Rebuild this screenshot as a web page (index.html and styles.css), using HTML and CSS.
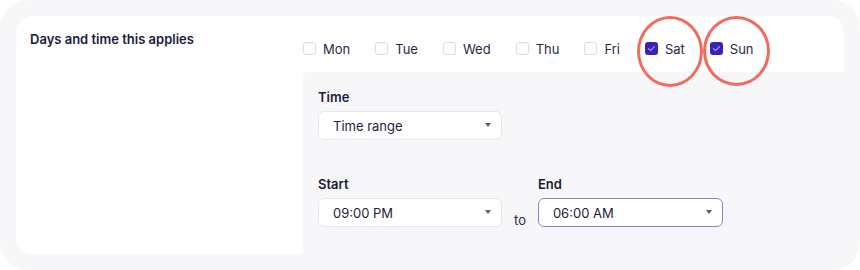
FILE: index.html
```html
<!DOCTYPE html>
<html lang="en">
<head>
<meta charset="utf-8">
<title>Days and time</title>
<link rel="stylesheet" href="styles.css">
</head>
<body>
<div class="frame">
  <div class="card">
    <div class="heading">Days and time this applies</div>
    <div class="right">
      <div class="days">
        <label class="day"><span class="box"></span>Mon</label>
        <label class="day"><span class="box"></span>Tue</label>
        <label class="day"><span class="box"></span>Wed</label>
        <label class="day"><span class="box"></span>Thu</label>
        <label class="day"><span class="box"></span>Fri</label>
        <label class="day"><span class="box checked"><svg viewBox="0 0 13 13" width="13" height="13"><path d="M3.6 6.7 L5.6 8.6 L9.4 4.6" fill="none" stroke="#a99cf2" stroke-width="1.2" stroke-linecap="round" stroke-linejoin="round"/></svg></span>Sat</label>
        <label class="day"><span class="box checked"><svg viewBox="0 0 13 13" width="13" height="13"><path d="M3.6 6.7 L5.6 8.6 L9.4 4.6" fill="none" stroke="#a99cf2" stroke-width="1.2" stroke-linecap="round" stroke-linejoin="round"/></svg></span>Sun</label>
      </div>
      <div class="panel">
        <div class="field">
          <div class="label">Time</div>
          <div class="select"><span>Time range</span><span class="caret"></span></div>
        </div>
        <div class="range">
          <div class="field">
            <div class="label">Start</div>
            <div class="select"><span>09:00 PM</span><span class="caret"></span></div>
          </div>
          <span class="to">to</span>
          <div class="field">
            <div class="label">End</div>
            <div class="select active"><span>06:00 AM</span><span class="caret"></span></div>
          </div>
        </div>
      </div>
    </div>
  </div>
  <span class="mark mark-sat"></span>
  <span class="mark mark-sun"></span>
</div>
</body>
</html>
```

FILE: styles.css
```css
* { box-sizing: border-box; }
html, body { margin: 0; padding: 0; background: #ffffff; }
body {
  font-family: Inter, "Noto Sans", "Liberation Sans", sans-serif;
  font-size: 13px;
  line-height: 16px;
  color: #25233f;
}
.frame {
  position: relative;
  width: 860px;
  height: 270px;
  padding: 16px 0 0 16px;
  background: #f7f7fa;
  border-radius: 28px;
  overflow: hidden;
}
.card {
  width: 828px;
  height: 238px;
  background: #ffffff;
  border-radius: 16px;
  display: grid;
  grid-template-columns: 287px 1fr;
}
.heading {
  padding: 15px 0 0 14px;
  font-weight: 600;
  color: #1c1a38;
}
.right {
  display: flex;
  flex-direction: column;
}
.days {
  height: 56px;
  padding-top: 24.5px;
  display: flex;
  gap: 25px;
}
.day {
  display: flex;
  align-items: center;
  gap: 7px;
  height: 16px;
  color: #2a2844;
}
.box {
  width: 13px;
  height: 13px;
  border: 1px solid #dcdce3;
  border-radius: 3px;
  background: #ffffff;
  display: flex;
}
.box.checked {
  border: none;
  background: #3a22b4;
}
.panel {
  flex: 1;
  margin-right: -16px;
  margin-bottom: -16px;
  background: #f7f7fa;
  border-radius: 4px 0 0 0;
  padding: 17px 15px 0;
  display: flex;
  flex-direction: column;
  gap: 36px;
}
.field {
  display: flex;
  flex-direction: column;
  gap: 6px;
}
.label {
  font-weight: 600;
  color: #1c1a38;
}
.select {
  width: 184px;
  height: 29px;
  background: #ffffff;
  border: 1px solid #e6e6ec;
  border-radius: 6px;
  padding: 0 10px 0 14px;
  display: flex;
  align-items: center;
  justify-content: space-between;
  color: #1f1d3a;
}
.select.active {
  width: 185px;
  border-color: #8c7fd8;
}
.caret {
  width: 0;
  height: 0;
  border-left: 3.5px solid transparent;
  border-right: 3.5px solid transparent;
  border-top: 4px solid #5c5b68;
  margin-top: -1px;
}
.range {
  display: flex;
  align-items: flex-end;
  gap: 12px;
}
.to {
  color: #2a2844;
  line-height: 16px;
  margin-bottom: -1px;
}
.mark {
  position: absolute;
  top: 16px;
  border: 3.4px solid #f36a5c;
  border-radius: 50%;
}
.mark-sat { left: 637px; width: 66px; height: 71px; }
.mark-sun { left: 703px; width: 67px; height: 70px; }
```
